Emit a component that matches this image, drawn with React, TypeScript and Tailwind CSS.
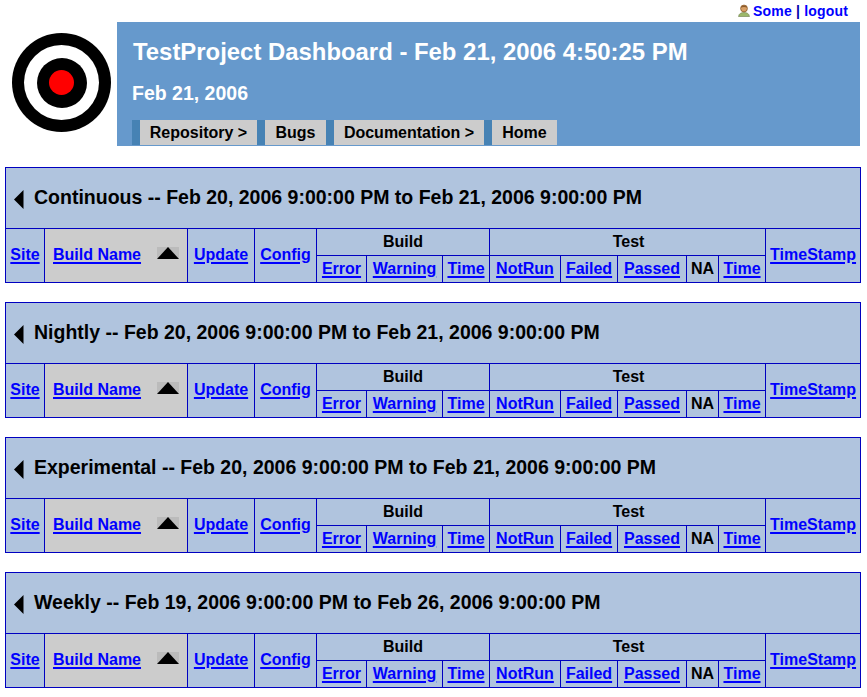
import React from "react";

const sections = [
  "Continuous -- Feb 20, 2006 9:00:00 PM to Feb 21, 2006 9:00:00 PM",
  "Nightly -- Feb 20, 2006 9:00:00 PM to Feb 21, 2006 9:00:00 PM",
  "Experimental -- Feb 20, 2006 9:00:00 PM to Feb 21, 2006 9:00:00 PM",
  "Weekly -- Feb 19, 2006 9:00:00 PM to Feb 26, 2006 9:00:00 PM",
];

const colWidths = [39, 143, 67, 62, 50, 76, 47, 71, 57, 69, 32, 47, 95];

const cell = "border border-[#0000c0] text-center p-0";
const tall = "border border-[#0000c0] text-center p-0 pb-[2px]";
const link = "text-[#0000ff] underline decoration-2 underline-offset-2";

function UserIcon() {
  return (
    <svg width="12" height="13" viewBox="0 0 12 13" className="shrink-0 mt-[-2px]">
      <path d="M0.5 12.5 C1 9.5 3 8.5 6 8.5 C9 8.5 11 9.5 11.5 12.5 Z" fill="#9cb86a" stroke="#6b7d4a" strokeWidth="0.6" />
      <circle cx="6" cy="4.5" r="3.4" fill="#d9a066" stroke="#8a5a2b" strokeWidth="0.8" />
      <path d="M2.8 3.6 C3.4 1.2 8.6 1.2 9.2 3.6 C7.5 2.7 4.5 2.7 2.8 3.6 Z" fill="#8a5a2b" />
    </svg>
  );
}

function Target() {
  return (
    <div className="w-[99px] h-[99px] rounded-full bg-black flex items-center justify-center shrink-0">
      <div className="w-[75px] h-[75px] rounded-full bg-white flex items-center justify-center">
        <div className="w-[50px] h-[50px] rounded-full bg-black flex items-center justify-center">
          <div className="w-[25px] h-[25px] rounded-full bg-[#ff0000]" />
        </div>
      </div>
    </div>
  );
}

function NavTab({ label, w }: { label: string; w: string }) {
  return (
    <div className="flex">
      <div className="w-2 bg-[#4682b4]" />
      <div className={`${w} h-[25px] bg-[#cccccc] text-black flex items-center justify-center text-base font-bold`}>
        {label}
      </div>
    </div>
  );
}

function BuildTable({ title }: { title: string }) {
  return (
    <table className="w-[856px] table-fixed border-collapse bg-[#b0c4de] text-base font-bold mb-[19px] ml-[5px]">
      <colgroup>
        {colWidths.map((w, i) => (
          <col key={i} style={{ width: w }} />
        ))}
      </colgroup>
      <tbody>
        <tr className="h-[61px]">
          <td colSpan={13} className="border border-[#0000c0] p-0 text-left">
            <div className="flex items-center pl-2 text-[19.5px] text-black">
              <svg width="10" height="19" viewBox="0 0 10 19" className="mr-[10px] mt-[3px]">
                <path d="M9.5 0 L0 9.5 L9.5 19 Z" fill="#000" />
              </svg>
              <span className="mt-[-1px]">{title}</span>
            </div>
          </td>
        </tr>
        <tr className="h-[27px]">
          <td rowSpan={2} className={tall}><a className={link}>Site</a></td>
          <td rowSpan={2} className={`${tall} bg-[#cccccc]`}>
            <div className="flex items-center justify-between pl-2 pr-2">
              <a className={link}>Build Name</a>
              <svg width="22" height="12" viewBox="0 0 22 12" className="mt-[-3px]">
                <rect width="22" height="12" fill="#bbbbbb" />
                <path d="M0 12 L11 0 L22 12 Z" fill="#000" />
              </svg>
            </div>
          </td>
          <td rowSpan={2} className={tall}><a className={link}>Update</a></td>
          <td rowSpan={2} className={tall}><a className={link}>Config</a></td>
          <td colSpan={3} className={`${cell} text-black`}>Build</td>
          <td colSpan={5} className={`${cell} text-black pl-[2px]`}>Test</td>
          <td rowSpan={2} className={tall}><a className={link}>TimeStamp</a></td>
        </tr>
        <tr className="h-[27px]">
          <td className={cell}><a className={link}>Error</a></td>
          <td className={cell}><a className={link}>Warning</a></td>
          <td className={cell}><a className={link}>Time</a></td>
          <td className={cell}><a className={link}>NotRun</a></td>
          <td className={cell}><a className={link}>Failed</a></td>
          <td className={cell}><a className={link}>Passed</a></td>
          <td className={`${cell} text-black`}>NA</td>
          <td className={cell}><a className={link}>Time</a></td>
        </tr>
      </tbody>
    </table>
  );
}

export default function App() {
  return (
    <div className="w-[867px] h-[697px] bg-white overflow-hidden font-['Liberation_Sans',Arial,sans-serif]">
      <div className="h-[22px] flex items-center justify-end gap-[3px] pr-[19px] text-sm font-bold tracking-[0.18px] text-[#0000ff]">
        <UserIcon />
        <span>
          Some <span className="text-[#0000aa]">|</span> logout
        </span>
      </div>
      <div className="flex h-[124px] mb-[21px]">
        <div className="w-[117px] pl-3 pt-[11px]">
          <Target />
        </div>
        <div className="w-[743px] bg-[#6699cc] pl-[15px] flex flex-col text-white font-bold">
          <div className="text-[23.9px] leading-7 pt-4 pl-px">TestProject Dashboard - Feb 21, 2006 4:50:25 PM</div>
          <div className="text-[19.5px] leading-6 pt-[15px]">Feb 21, 2006</div>
          <div className="flex mt-[15px]">
            <NavTab label="Repository >" w="w-[117px]" />
            <NavTab label="Bugs" w="w-[61px]" />
            <NavTab label="Documentation >" w="w-[150px]" />
            <NavTab label="Home" w="w-[65px]" />
          </div>
        </div>
      </div>
      {sections.map((s) => (
        <BuildTable key={s} title={s} />
      ))}
    </div>
  );
}
